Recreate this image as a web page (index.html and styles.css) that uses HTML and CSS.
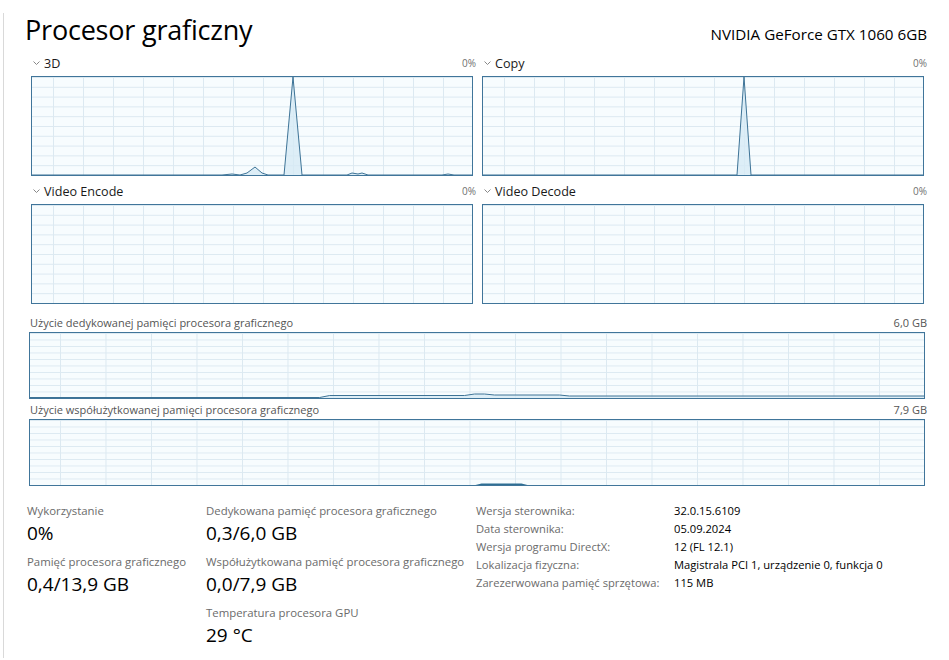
FILE: index.html
```html
<!DOCTYPE html>
<html lang="pl">
<head>
  <meta charset="UTF-8">
  <meta name="viewport" content="width=device-width, initial-scale=1.0">
  <title>Procesor graficzny</title>
  <link rel="stylesheet" href="styles.css">
</head>
<body>
  <div class="page">
    <header class="head">
      <h1>Procesor graficzny</h1>
      <span class="model">NVIDIA GeForce GTX 1060 6GB</span>
    </header>

    <!-- engines -->
    <section class="engines">
      <div class="engine">
        <div class="engine-head">
          <span class="name"><svg class="chev" width="7" height="5" viewBox="0 0 7 5"><polyline points="0.5,0.5 3.5,3.5 6.5,0.5"/></svg>3D</span>
          <span class="pct">0%</span>
        </div>
        <div class="graph small">
          <svg viewBox="0 0 440 98" preserveAspectRatio="none">
            <polygon class="fill" points="0,98 190,98 200,97 208,98 215,96 223,90 230,96 236,98 252,98 261,0 270,98 315,98 320,96 326,97 330,96 336,98 410,98 416,97 422,98 440,98"/>
            <polyline class="line" points="0,98 190,98 200,97 208,98 215,96 223,90 230,96 236,98 252,98 261,0 270,98 315,98 320,96 326,97 330,96 336,98 410,98 416,97 422,98 440,98"/>
          </svg>
        </div>
      </div>
      <div class="engine">
        <div class="engine-head">
          <span class="name"><svg class="chev" width="7" height="5" viewBox="0 0 7 5"><polyline points="0.5,0.5 3.5,3.5 6.5,0.5"/></svg>Copy</span>
          <span class="pct">0%</span>
        </div>
        <div class="graph small">
          <svg viewBox="0 0 440 98" preserveAspectRatio="none">
            <polygon class="fill" points="0,98 254,98 261,0 268,98 440,98"/>
            <polyline class="line" points="0,98 254,98 261,0 268,98 440,98"/>
          </svg>
        </div>
      </div>
      <div class="engine">
        <div class="engine-head">
          <span class="name"><svg class="chev" width="7" height="5" viewBox="0 0 7 5"><polyline points="0.5,0.5 3.5,3.5 6.5,0.5"/></svg>Video Encode</span>
          <span class="pct">0%</span>
        </div>
        <div class="graph small"></div>
      </div>
      <div class="engine">
        <div class="engine-head">
          <span class="name"><svg class="chev" width="7" height="5" viewBox="0 0 7 5"><polyline points="0.5,0.5 3.5,3.5 6.5,0.5"/></svg>Video Decode</span>
          <span class="pct">0%</span>
        </div>
        <div class="graph small"></div>
      </div>
    </section>

    <!-- memory -->
    <section class="mem">
      <div class="mem-head">
        <span>Użycie dedykowanej pamięci procesora graficznego</span>
        <span>6,0 GB</span>
      </div>
      <div class="graph wide">
        <svg viewBox="0 0 895 65" preserveAspectRatio="none">
          <polygon class="fill" points="0,64.5 290,64.5 300,62.5 435,62.5 445,61 455,61 465,62 530,62 540,63 895,63 895,65 0,65"/>
          <polyline class="line" points="0,64.5 290,64.5 300,62.5 435,62.5 445,61 455,61 465,62 530,62 540,63 895,63"/>
        </svg>
      </div>
    </section>
    <section class="mem">
      <div class="mem-head">
        <span>Użycie współużytkowanej pamięci procesora graficznego</span>
        <span>7,9 GB</span>
      </div>
      <div class="graph wide">
        <svg viewBox="0 0 895 66" preserveAspectRatio="none">
          <polygon class="blob" points="446,66 452,64.5 492,64.5 498,66"/>
        </svg>
      </div>
    </section>

    <!-- stats -->
    <section class="stats">
      <div class="col col-a">
        <div class="stat">
          <div class="stat-label">Wykorzystanie</div>
          <div class="stat-value">0%</div>
        </div>
        <div class="stat">
          <div class="stat-label">Pamięć procesora graficznego</div>
          <div class="stat-value">0,4/13,9 GB</div>
        </div>
      </div>
      <div class="col col-b">
        <div class="stat">
          <div class="stat-label">Dedykowana pamięć procesora graficznego</div>
          <div class="stat-value">0,3/6,0 GB</div>
        </div>
        <div class="stat">
          <div class="stat-label">Współużytkowana pamięć procesora graficznego</div>
          <div class="stat-value">0,0/7,9 GB</div>
        </div>
        <div class="stat">
          <div class="stat-label">Temperatura procesora GPU</div>
          <div class="stat-value">29 °C</div>
        </div>
      </div>
      <dl class="info">
        <dt>Wersja sterownika:</dt><dd>32.0.15.6109</dd>
        <dt>Data sterownika:</dt><dd>05.09.2024</dd>
        <dt>Wersja programu DirectX:</dt><dd>12 (FL 12.1)</dd>
        <dt>Lokalizacja fizyczna:</dt><dd>Magistrala PCI 1, urządzenie 0, funkcja 0</dd>
        <dt>Zarezerwowana pamięć sprzętowa:</dt><dd>115 MB</dd>
      </dl>
    </section>
  </div>
</body>
</html>
```

FILE: styles.css
```css
body {
  margin: 0;
  background: #fff;
  font-family: "Open Sans", "Noto Sans", sans-serif;
  color: #000;
}

.page {
  margin: 15px 0 0 3px;
  min-height: 645px;
  border-left: 1px solid #d9d9d9;
  padding-right: 22px;
}

.head {
  display: flex;
  justify-content: space-between;
  align-items: baseline;
  margin-top: -2px;
  height: 32px;
  padding-left: 21px;
}
.head h1 {
  margin: 0;
  font-size: 27px;
  line-height: 34px;
  font-weight: 400;
  letter-spacing: -0.2px;
}
.model {
  font-size: 15.2px;
}

/* engines */
.engines {
  display: grid;
  grid-template-columns: 1fr 1fr;
  column-gap: 6px;
  row-gap: 8px;
  margin: 11px 0 0 27px;
}
.engine-head {
  display: flex;
  justify-content: space-between;
  align-items: center;
  height: 14px;
  margin-bottom: 6px;
}
.name {
  display: flex;
  align-items: center;
  font-size: 12.6px;
  color: #1a1a1a;
}
.chev {
  margin: 0 4px 0 2px;
}
.chev polyline {
  fill: none;
  stroke: #888;
  stroke-width: 1;
}
.pct {
  font-size: 10px;
  color: #707070;
}

.graph {
  box-sizing: border-box;
  border: 1px solid #40759a;
  background-color: #f7fcfe;
  background-image:
    linear-gradient(to right, #dce9f1 1px, transparent 1px),
    linear-gradient(to bottom, #dce9f1 1px, transparent 1px);
}
.graph svg {
  display: block;
  width: 100%;
  height: 100%;
}
.graph.small {
  height: 100px;
  margin-right: 3px;
  background-size: 30px 100%, 100% 10%;
  background-position: 21px 0, 0 0;
}
.graph.wide {
  margin-right: 2px;
  background-size: 45.5px 100%, 100% 10%;
  background-position: 30px 0, 0 0;
}

.fill {
  fill: #d6eaf5;
  opacity: 0.8;
}
.line {
  fill: none;
  stroke: #3d7396;
  stroke-width: 1;
  vector-effect: non-scaling-stroke;
}
.blob {
  fill: #2f6f93;
}

/* memory */
.mem {
  margin: 12px 0 0 25px;
}
.mem + .mem {
  margin-top: 4px;
}
.mem-head {
  display: flex;
  justify-content: space-between;
  height: 14px;
  line-height: 14px;
  margin-bottom: 2px;
  padding-left: 1px;
  font-size: 11px;
  color: #555;
}
.mem .graph.wide {
  height: 67px;
}

/* stats */
.stats {
  display: flex;
  margin: 17px 0 0 23px;
}
.col-a {
  width: 179px;
}
.col-b {
  width: 270px;
}
.stat {
  margin-bottom: 7px;
}
.stat-label {
  font-size: 11.4px;
  line-height: 16px;
  color: #6b6b6b;
}
.stat-value {
  font-size: 19px;
  line-height: 28px;
}

.info {
  display: grid;
  grid-template-columns: 198px auto;
  grid-auto-rows: 18px;
  margin: -1px 0 0;
  font-size: 11.2px;
  line-height: 18px;
}
.info dt {
  color: #6b6b6b;
}
.info dd {
  margin: 0;
}
```
